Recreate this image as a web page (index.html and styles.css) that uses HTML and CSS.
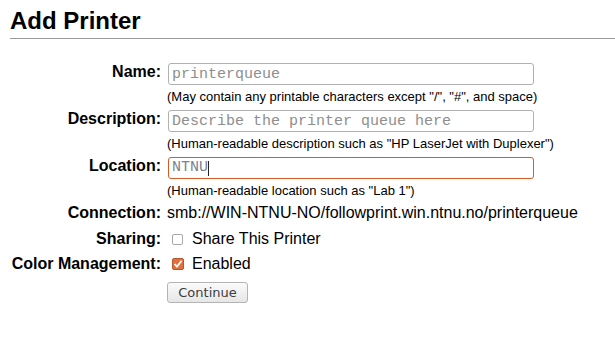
FILE: index.html
```html
<!DOCTYPE html>
<html lang="en">
  <head>
    <meta charset="UTF-8" />
    <title>Add Printer</title>
    <link rel="stylesheet" href="styles.css">
  </head>
  <body>
    <div class="page">
      <h1 class="title">Add Printer</h1>

      <form class="printer-form">
        <!-- 이름 -->
        <div class="row">
          <label class="label" for="name">Name:</label>
          <div class="field">
            <input class="text-input" type="text" id="name" placeholder="printerqueue" />
            <div class="hint">(May contain any printable characters except "/", "#", and space)</div>
          </div>
        </div>

        <!-- 설명 -->
        <div class="row">
          <label class="label" for="desc">Description:</label>
          <div class="field">
            <input class="text-input" type="text" id="desc" placeholder="Describe the printer queue here" />
            <div class="hint">(Human-readable description such as "HP LaserJet with Duplexer")</div>
          </div>
        </div>

        <!-- 위치 -->
        <div class="row">
          <label class="label" for="location">Location:</label>
          <div class="field">
            <div class="text-input focused">NTNU<span class="caret"></span></div>
            <div class="hint">(Human-readable location such as "Lab 1")</div>
          </div>
        </div>

        <div class="row row-connection">
          <span class="label">Connection:</span>
          <span class="value">smb://WIN-NTNU-NO/followprint.win.ntnu.no/printerqueue</span>
        </div>

        <div class="row row-sharing">
          <span class="label">Sharing:</span>
          <span class="check-line">
            <span class="box"></span>
            Share This Printer
          </span>
        </div>

        <div class="row row-color">
          <span class="label">Color Management:</span>
          <span class="check-line">
            <span class="box checked">
              <svg width="10" height="10" viewBox="0 0 10 10">
                <path d="M1.6 5 L4 7.6 L8.6 1.8" fill="none" stroke="#fff" stroke-width="1.8" />
              </svg>
            </span>
            Enabled
          </span>
        </div>

        <div class="row">
          <span class="label"></span>
          <div><button type="button" class="btn">Continue</button></div>
        </div>
      </form>
    </div>
  </body>
</html>
```

FILE: styles.css
```css
/* 기본 */
body {
  margin: 0;
  font-family: "Liberation Sans", Arial, sans-serif;
  font-size: 16px;
  color: #000;
  background: #fff;
}

.page {
  padding-left: 10px;
  padding-top: 7px;
}

.title {
  margin: 0;
  font-size: 24px;
  line-height: 28px;
  font-weight: 700;
  padding-bottom: 3px;
  border-bottom: 1px solid #9a9a9a;
}

/* 폼 */
.printer-form {
  margin-top: 24px;
}

.row {
  display: grid;
  grid-template-columns: 151px 1fr;
  column-gap: 6px;
  align-items: start;
}

.label {
  text-align: right;
  font-weight: 700;
  line-height: 18px;
  white-space: nowrap;
}

.field {
  display: flex;
  flex-direction: column;
  align-items: flex-start;
}

.text-input {
  box-sizing: border-box;
  width: 366px;
  height: 22px;
  margin: 0 0 0 1px;
  padding: 0 3px;
  border: 1px solid #b0b0b0;
  border-radius: 3px;
  font-family: "Liberation Mono", "Courier New", monospace;
  font-size: 15px;
  line-height: 20px;
  color: #777;
  background: #fff;
  outline: none;
}

.text-input::placeholder {
  color: #8e8e8e;
}

.text-input.focused {
  border-color: #db5a28;
  color: #7a8290;
  display: flex;
  align-items: center;
}

.caret {
  display: inline-block;
  width: 1px;
  height: 15px;
  background: #222;
}

.hint {
  font-size: 13px;
  line-height: 15px;
  margin: 4px 0 6px;
}

.value {
  line-height: 18px;
  white-space: nowrap;
}

.row-connection {
  margin-bottom: 8px;
}

.row-sharing {
  margin-bottom: 7px;
}

.row-color {
  margin-bottom: 9px;
}

/* 체크박스 */
.check-line {
  display: flex;
  align-items: center;
  line-height: 18px;
  padding-left: 5px;
  gap: 8px;
}

.box {
  box-sizing: border-box;
  width: 11px;
  height: 11px;
  margin: 0 1px 0 0;
  border: 1px solid #a8a8a8;
  border-radius: 2px;
  background: #fff;
  display: flex;
  align-items: center;
  justify-content: center;
}

.box.checked {
  width: 12px;
  height: 12px;
  margin: 0;
  background: #e2703f;
  border-color: #b9552a;
}

.box svg {
  display: block;
}

/* 버튼 */
.btn {
  box-sizing: border-box;
  width: 81px;
  height: 21px;
  padding: 0;
  border: 1px solid #b4b4b4;
  border-radius: 3px;
  background: linear-gradient(#fbfbfb, #e6e6e6);
  font-family: "DejaVu Sans", sans-serif;
  font-size: 13px;
  color: #3c3c3c;
  line-height: 19px;
}
```
